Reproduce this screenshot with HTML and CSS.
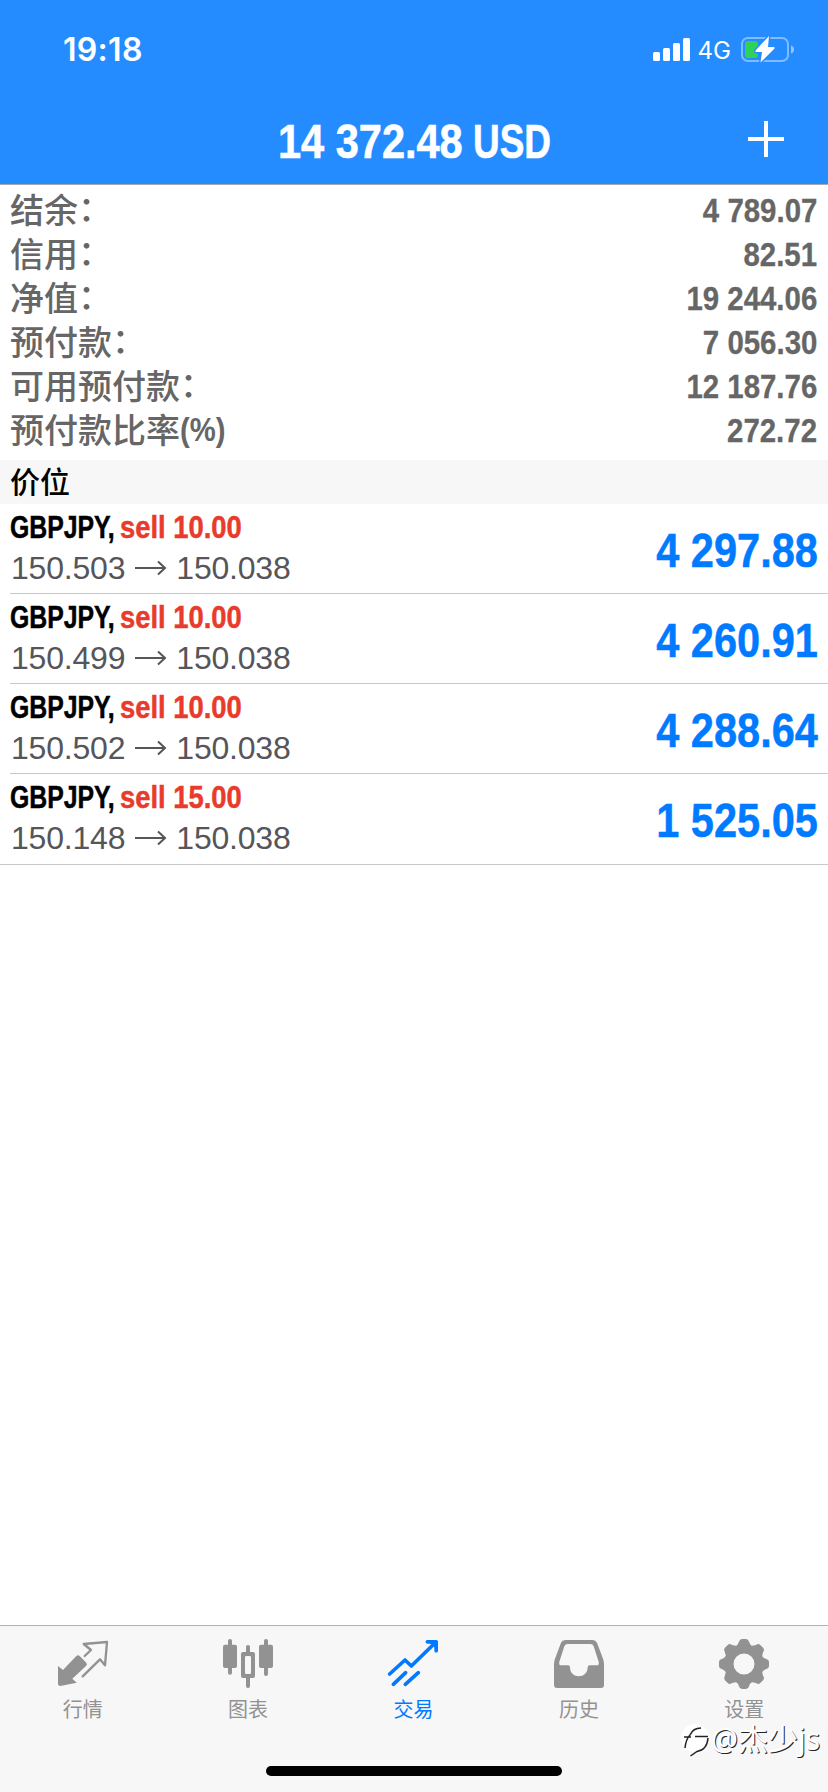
FILE: index.html
```html
<!DOCTYPE html>
<html lang="zh-CN">
<head>
<meta charset="utf-8">
<title>交易</title>
<link rel="stylesheet" href="styles.css">
</head>
<body>
<div class="screen">
  <header class="header">
    <div class="status">
      <span class="time">19:18</span>
      <div class="status-right">
        <svg class="signal" width="37" height="23" viewBox="0 0 37 23" fill="#fff"><rect x="0" y="14" width="7" height="9" rx="1.5"/><rect x="10" y="10" width="7" height="13" rx="1.5"/><rect x="20" y="5" width="7" height="18" rx="1.5"/><rect x="30" y="0" width="7" height="23" rx="1.5"/></svg>
        <span class="network">4G</span>
        <svg class="battery" width="54" height="27" viewBox="0 0 54 27"><rect x="1" y="2" width="46" height="23" rx="6" fill="none" stroke="#fff" stroke-opacity=".42" stroke-width="2"/><path d="M50 9.500q3 1 3 4t-3 4z" fill="#fff" fill-opacity=".5"/><rect x="4" y="5" width="13" height="17" rx="3" fill="#30d158"/><path d="M28 0L14.500 14.500q-.5 1.500 1 1.500h5.500L19.500 26.500 33.500 12.500q.5-1.500-1-1.500h-5.500z" fill="#fff" stroke="#258cff" stroke-width="3" paint-order="stroke" stroke-linejoin="round"/></svg>
      </div>
    </div>
    <div class="navbar">
      <h1 class="title"><span class="amount">14 372.48</span><span class="currency">USD</span></h1>
      <svg class="plus" width="36" height="36" viewBox="0 0 36 36"><path d="M18 0v36M0 18h36" stroke="#fff" stroke-width="4"/></svg>
    </div>
  </header>
  <main class="content">
    <dl class="summary">
      <div class="row"><dt>结余<i>：</i></dt><dd>4 789.07</dd></div>
      <div class="row"><dt>信用<i>：</i></dt><dd>82.51</dd></div>
      <div class="row"><dt>净值<i>：</i></dt><dd>19 244.06</dd></div>
      <div class="row"><dt>预付款<i>：</i></dt><dd>7 056.30</dd></div>
      <div class="row"><dt>可用预付款<i>：</i></dt><dd>12 187.76</dd></div>
      <div class="row"><dt>预付款比率<b>(%)</b></dt><dd>272.72</dd></div>
    </dl>
    <h2 class="section">价位</h2>
    <ul class="positions">
      <li class="position"><div class="info"><div class="deal"><span class="symbol">GBPJPY,</span><span class="side">sell 10.00</span></div><div class="prices"><span>150.503</span><svg class="arrow" width="31" height="14" viewBox="0 0 31 14"><path d="M0 7h30M23 .5L30 7l-7 6.500"/></svg><span>150.038</span></div></div><div class="profit">4 297.88</div></li>
      <li class="position"><div class="info"><div class="deal"><span class="symbol">GBPJPY,</span><span class="side">sell 10.00</span></div><div class="prices"><span>150.499</span><svg class="arrow" width="31" height="14" viewBox="0 0 31 14"><path d="M0 7h30M23 .5L30 7l-7 6.500"/></svg><span>150.038</span></div></div><div class="profit">4 260.91</div></li>
      <li class="position"><div class="info"><div class="deal"><span class="symbol">GBPJPY,</span><span class="side">sell 10.00</span></div><div class="prices"><span>150.502</span><svg class="arrow" width="31" height="14" viewBox="0 0 31 14"><path d="M0 7h30M23 .5L30 7l-7 6.500"/></svg><span>150.038</span></div></div><div class="profit">4 288.64</div></li>
      <li class="position"><div class="info"><div class="deal"><span class="symbol">GBPJPY,</span><span class="side">sell 15.00</span></div><div class="prices"><span>150.148</span><svg class="arrow" width="31" height="14" viewBox="0 0 31 14"><path d="M0 7h30M23 .5L30 7l-7 6.500"/></svg><span>150.038</span></div></div><div class="profit">1 525.05</div></li>
    </ul>
  </main>
  <footer class="footer">
    <nav class="tabs">
      <a class="tab"><svg class="icon" viewBox="0 0 150 150"><path d="M80 54L99 36 77 18 147 12 141 82 126 64 74 115" fill="none" stroke="currentColor" stroke-width="7" stroke-linejoin="round" stroke-linecap="round"/><path d="M0 84L15 96 55 54Q60 49 65 54L85 74Q89 79 84 84L43 122 56 134 7 144Q0 144 0 137z" fill="currentColor"/></svg>行情</a>
      <a class="tab"><svg class="icon" viewBox="0 0 150 150"><g fill="currentColor"><rect x="0" y="20" width="42" height="70" rx="6"/><rect x="15" y="3" width="12" height="107" rx="6"/><rect x="108" y="20" width="42" height="70" rx="6"/><rect x="123" y="3" width="12" height="111" rx="6"/><path fill-rule="evenodd" d="M60 42h9V27a6 6 0 0 1 12 0v15h9q6 0 6 6v66q0 6-6 6h-9v24a6 6 0 0 1-12 0v-24h-9q-6 0-6-6V48q0-6 6-6zm10 12q-4 0-4 4v46q0 4 4 4h10q4 0 4-4V58q0-4-4-4z"/></g></svg>图表</a>
      <a class="tab active"><svg class="icon" viewBox="0 0 150 150"><g fill="none" stroke="currentColor" stroke-width="11" stroke-linecap="round" stroke-linejoin="round"><path d="M5 108L51 66 70 84 144 12M118 11.500h26.500V38M16 139L53 104M52 139L91 104"/></g><path d="M118 10h32v28l-9-9-14-12z" fill="currentColor"/></svg>交易</a>
      <a class="tab"><svg class="icon" viewBox="0 0 150 150"><path fill="currentColor" fill-rule="evenodd" d="M34 6H116Q125 6 129 14L147 62Q150 70 150 78V141Q150 150 141 150H9Q0 150 0 141V78Q0 70 3 62L21 14Q25 6 34 6zM41 18Q34 18 31 25L16 71Q14 82 21 82H42Q48 82 48 88C48 124 101 124 101 88Q101 82 107 82H129Q136 82 134 71L119 25Q117 18 109 18z"/></svg>历史</a>
      <a class="tab"><svg class="icon" viewBox="0 -3 150 150" fill="currentColor"><defs><path id="tooth" d="M49 23Q57 17 60 8 62 0 69 0H81Q88 0 90 8 93 17 101 23L88 42H62z"/></defs><circle cx="75" cy="75" r="44" fill="none" stroke="currentColor" stroke-width="25"/><use href="#tooth"/><use href="#tooth" transform="rotate(45 75 75)"/><use href="#tooth" transform="rotate(90 75 75)"/><use href="#tooth" transform="rotate(135 75 75)"/><use href="#tooth" transform="rotate(180 75 75)"/><use href="#tooth" transform="rotate(225 75 75)"/><use href="#tooth" transform="rotate(270 75 75)"/><use href="#tooth" transform="rotate(315 75 75)"/></svg>设置</a>
    </nav>
    <div class="home"></div>
  </footer>
  <div class="watermark">
    <svg width="30" height="38" viewBox="0 0 30 38"><circle cx="14" cy="18" r="14" fill="#fff"/><path d="M4 28Q5 19 9 15 12 8 20 8M3 17h7M14 16.500h13M27 18Q26 30 16 31.500L9.500 36" fill="none" stroke="#222" stroke-width="1.500"/></svg>
    <span>@杰少js</span>
  </div>
</div>
</body>
</html>
```
FILE: styles.css
```css
* { box-sizing: border-box; }
body, h1, h2, dl, dd, ul { margin: 0; padding: 0; }
body { background: #fff; font-family: "Liberation Sans", "Noto Sans CJK SC", sans-serif; }
svg { display: block; flex: none; overflow: visible; }
.screen { position: relative; display: flex; flex-direction: column; width: 828px; height: 1792px; background: #fff; overflow: hidden; }
.header { height: 185px; background: #258cff; border-bottom: 1px solid #a7abb0; color: #fff; }
.status { display: flex; justify-content: space-between; align-items: center; height: 96px; padding: 3px 33px 0 63px; }
.time { font: 600 32px/40px Inter, sans-serif; letter-spacing: .3px; }
.status-right { display: flex; align-items: center; }
.network { margin: 2px 10px 0 8px; font: 400 24px/28px Inter, sans-serif; }
.navbar { display: grid; grid-template-columns: 1fr auto 1fr; align-items: center; height: 88px; padding: 0 44px; }
.title { grid-column: 2; display: flex; gap: 10px; padding-top: 3px; font: bold 48px/56px "Liberation Sans", sans-serif; white-space: nowrap; -webkit-text-stroke: .6px; }
.amount { width: 185px; transform: scaleX(.865); transform-origin: left; }
.currency { width: 78px; transform: scaleX(.77); transform-origin: left; }
.plus { justify-self: end; margin-top: -2px; }
.content { flex: 1; }
.summary { padding: 3px 11px 8px 10px; color: #666; }
.row { display: flex; justify-content: space-between; height: 44px; }
.row dt { height: 42px; font: 500 34px/42px "Noto Sans CJK SC", sans-serif; white-space: nowrap; }
.row dt i { display: inline-block; height: 42px; line-height: 37px; vertical-align: top; font-style: normal; }
.row dt b { display: inline-block; height: 42px; line-height: 42px; vertical-align: top; font-family: "Liberation Sans", sans-serif; transform: scaleX(.86); transform-origin: left; }
.row dd { font: bold 34px/44px "Liberation Sans", sans-serif; transform: scaleX(.865); transform-origin: right; -webkit-text-stroke: .3px; }
.section { height: 44px; padding-left: 10px; background: #f7f7f7; color: #000; font: 500 30px/41px "Noto Sans CJK SC", sans-serif; }
.positions { list-style: none; border-bottom: 1px solid #c8c7cc; }
.position { display: flex; justify-content: space-between; height: 90px; margin-left: 10px; padding: 5px 10px 0 0; border-bottom: 1px solid #c8c7cc; }
.position:last-child { border-bottom: 0; }
.deal { display: flex; font: bold 32px/36px "Liberation Sans", sans-serif; color: #000; white-space: nowrap; -webkit-text-stroke: .5px; }
.symbol { width: 110px; transform: scaleX(.775); transform-origin: left; }
.side { color: #e93b2b; transform: scaleX(.855); transform-origin: left; }
.prices { display: flex; align-items: center; height: 46px; padding-left: 1px; font-size: 32px; line-height: 46px; color: #55555a; letter-spacing: -.2px; }
.arrow { margin: 0 10px; fill: none; stroke: #55555a; stroke-width: 2; }
.profit { font: bold 48px/84px "Liberation Sans", sans-serif; color: #007aff; transform: scaleX(.865); transform-origin: right; -webkit-text-stroke: .5px; }
.footer { display: flex; flex-direction: column; align-items: center; height: 167px; background: #f7f7f7; border-top: 1px solid #b2b2b2; }
.tabs { display: grid; grid-template-columns: repeat(5, 1fr); width: 100%; height: 140px; padding-right: 1px; }
.tab { display: flex; flex-direction: column; align-items: center; padding-top: 12px; color: #929292; font: 400 20px/28px "Noto Sans CJK SC", sans-serif; gap: 7px; }
.active { color: #007aff; }
.icon { width: 50px; height: 50px; }
.home { width: 296px; height: 10px; border-radius: 5px; background: #000; }
.watermark { position: absolute; left: 681px; top: 1719px; display: flex; align-items: center; color: #fff; font: 400 30px/40px "Noto Sans", "Noto Sans CJK SC", sans-serif; text-shadow: 1px 1px 0 #222; white-space: nowrap; }
```
